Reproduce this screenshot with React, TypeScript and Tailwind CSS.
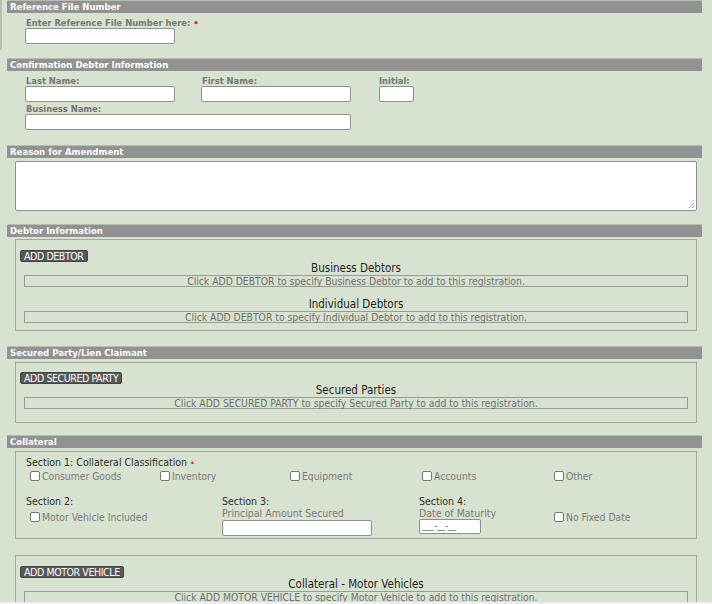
import React from "react";

const font = { fontFamily: '"DejaVu Sans Condensed", "DejaVu Sans", Verdana, sans-serif' };

function Bar({ title }: { title: string }) {
  return (
    <div className="h-[13px] bg-[#929292] border-t border-[#b7bcb2] pl-[3px] text-[9.5px] leading-[12px] font-bold text-white whitespace-nowrap">
      {title}
    </div>
  );
}

function Label({ children, className = "" }: { children: React.ReactNode; className?: string }) {
  return (
    <div className={`text-[9.3px] leading-[11px] font-bold text-[#767676] whitespace-nowrap ${className}`}>
      {children}
    </div>
  );
}

function TextInput({ className = "" }: { className?: string }) {
  return <div className={`h-[16px] bg-white border border-[#8e8e8e] rounded-[2px] ${className}`} />;
}

function DarkButton({ children }: { children: React.ReactNode }) {
  return (
    <div className="pl-[4px] h-[12px] flex">
      <div className="h-[12px] px-[3px] bg-[#575757] border border-[#454545] rounded-[2px] text-white text-[10.5px] leading-[10px] tracking-[-0.4px] whitespace-nowrap">
        {children}
      </div>
    </div>
  );
}

function ListRow({ text }: { text: string }) {
  return (
    <div className="mx-[8px] h-[12px] border border-[#9a9a9a] text-center text-[10.3px] leading-[10px] text-[#6f6f6f] whitespace-nowrap">
      {text}
    </div>
  );
}

function ListTitle({ text, className = "" }: { text: string; className?: string }) {
  return (
    <div className={`h-[13px] text-center text-[11.5px] leading-[13px] text-[#1e1e1e] ${className}`}>{text}</div>
  );
}

function Check({ label, className = "" }: { label: string; className?: string }) {
  return (
    <div className={`h-[12px] flex items-center gap-[2px] text-[10.3px] leading-[12px] text-[#7a7a7a] whitespace-nowrap ${className}`}>
      <span className="inline-block shrink-0 w-[10px] h-[10px] bg-white border border-[#777] rounded-[2px]" />
      <span>{label}</span>
    </div>
  );
}

function SectionHead({ children }: { children: React.ReactNode }) {
  return <div className="h-[12px] text-[10.5px] leading-[12px] text-[#2e2e2e] whitespace-nowrap">{children}</div>;
}

export default function App() {
  return (
    <div style={font} className="w-[712px] h-[604px] overflow-hidden bg-[#d8e2d0] relative">
      <div className="absolute left-0 top-0 w-[2px] h-[50px] bg-[#b9bfb4]" />
      <div className="pl-[7px] pr-[10px]">
        {/* Reference File Number */}
        <Bar title="Reference File Number" />
        <div className="h-[15px] pl-[19px] pt-[4px]">
          <Label>
            Enter Reference File Number here: <span className="text-[#e02020]">•</span>
          </Label>
        </div>
        <TextInput className="ml-[18px] w-[150px]" />

        {/* Confirmation Debtor Information */}
        <div className="mt-[14px]">
          <Bar title="Confirmation Debtor Information" />
        </div>
        <div className="pl-[18px] flex">
          <div className="w-[176px]">
            <div className="h-[15px] pt-[4px] pl-[1px]">
              <Label>Last Name:</Label>
            </div>
            <TextInput className="w-[150px]" />
          </div>
          <div className="w-[178px]">
            <div className="h-[15px] pt-[4px] pl-[1px]">
              <Label>First Name:</Label>
            </div>
            <TextInput className="w-[150px]" />
          </div>
          <div>
            <div className="h-[15px] pt-[4px]">
              <Label>Initial:</Label>
            </div>
            <TextInput className="w-[35px]" />
          </div>
        </div>
        <div className="pl-[18px]">
          <div className="h-[12px] pt-[1px] pl-[1px]">
            <Label>Business Name:</Label>
          </div>
          <TextInput className="w-[326px]" />
        </div>

        {/* Reason for Amendment */}
        <div className="mt-[15px]">
          <Bar title="Reason for Amendment" />
        </div>
        <div className="ml-[8px] mt-[3px] w-[682px] h-[50px] bg-white border border-[#8e8e8e] rounded-[2px] relative">
          <svg className="absolute right-[1px] bottom-[1px]" width="7" height="7" viewBox="0 0 7 7">
            <path d="M6 1 L1 6 M6 4 L4 6" stroke="#888" strokeWidth="0.8" />
          </svg>
        </div>

        {/* Debtor Information */}
        <div className="mt-[13px]">
          <Bar title="Debtor Information" />
        </div>
        <div className="ml-[8px] mt-[2px] w-[682px] h-[92px] border border-[#a3a89f] pt-[10px]">
          <DarkButton>ADD DEBTOR</DarkButton>
          <ListTitle text="Business Debtors" />
          <ListRow text="Click ADD DEBTOR to specify Business Debtor to add to this registration." />
          <ListTitle text="Individual Debtors" className="mt-[11px]" />
          <ListRow text="Click ADD DEBTOR to specify Individual Debtor to add to this registration." />
        </div>

        {/* Secured Party */}
        <div className="mt-[15px]">
          <Bar title="Secured Party/Lien Claimant" />
        </div>
        <div className="ml-[8px] mt-[3px] w-[682px] h-[61px] border border-[#a3a89f] pt-[9px]">
          <DarkButton>ADD SECURED PARTY</DarkButton>
          <ListTitle text="Secured Parties" />
          <ListRow text="Click ADD SECURED PARTY to specify Secured Party to add to this registration." />
        </div>

        {/* Collateral */}
        <div className="mt-[12px]">
          <Bar title="Collateral" />
        </div>
        <div className="ml-[8px] mt-[3px] w-[682px] h-[88px] border border-[#a3a89f] pt-[4px] pl-[10px]">
          <SectionHead>
            Section 1: Collateral Classification <span className="text-[#e02020] text-[9px]">•</span>
          </SectionHead>
          <div className="flex mt-[2px] pl-[4px]">
            <Check label="Consumer Goods" className="w-[130px]" />
            <Check label="Inventory" className="w-[130px]" />
            <Check label="Equipment" className="w-[132px]" />
            <Check label="Accounts" className="w-[132px]" />
            <Check label="Other" />
          </div>
          <div className="flex mt-[13px]">
            <div className="w-[196px]">
              <SectionHead>Section 2:</SectionHead>
              <Check label="Motor Vehicle Included" className="mt-[4px] pl-[4px]" />
            </div>
            <div className="w-[197px]">
              <SectionHead>Section 3:</SectionHead>
              <div className="h-[12px] text-[10.5px] leading-[12px] text-[#7a7a7a] whitespace-nowrap">
                Principal Amount Secured
              </div>
              <TextInput className="mt-[1px] w-[150px]" />
            </div>
            <div className="w-[135px]">
              <SectionHead>Section 4:</SectionHead>
              <div className="h-[12px] text-[10.5px] leading-[12px] text-[#7a7a7a] whitespace-nowrap">
                Date of Maturity
              </div>
              <div className="w-[62px] h-[15px] bg-white border border-[#8e8e8e] rounded-[2px] text-[9px] leading-[13px] text-[#555] pl-[2px] whitespace-nowrap">
                ___-__-__
              </div>
            </div>
            <div className="pt-[16px]">
              <Check label="No Fixed Date" />
            </div>
          </div>
        </div>

        {/* Motor vehicles */}
        <div className="ml-[8px] mt-[16px] w-[682px] h-[80px] border border-[#a3a89f] pt-[10px]">
          <DarkButton>ADD MOTOR VEHICLE</DarkButton>
          <ListTitle text="Collateral - Motor Vehicles" />
          <ListRow text="Click ADD MOTOR VEHICLE to specify Motor Vehicle to add to this registration." />
        </div>
      </div>
      <div className="absolute left-0 bottom-0 w-full h-[2px] bg-[#eeeeee]" />
    </div>
  );
}
